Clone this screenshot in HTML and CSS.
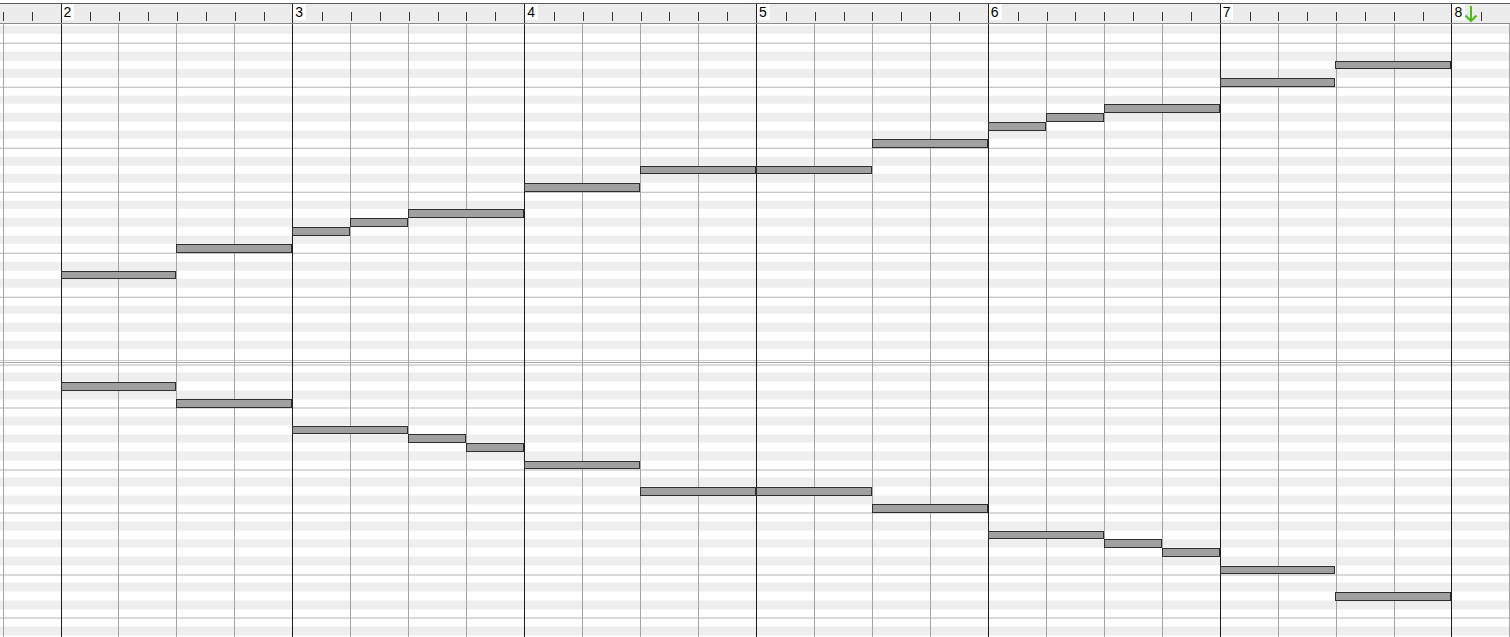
FILE: index.html
```html
<!DOCTYPE html>
<html lang="en">
<head>
    <meta charset="UTF-8">
    <meta name="viewport" content="width=device-width, initial-scale=1.0">
    <title>Piano roll</title>
    <link rel="stylesheet" href="styles.css">
</head>
<body>

<!-- ruler: one block per measure, eight eighth-note cells each -->
<div class="ruler">
    <div class="rbars">
        <div class="rm"><div class="et num"><span></span></div><div class="et"></div><div class="et"></div><div class="et"></div><div class="et"></div><div class="et"></div><div class="et"></div><div class="et"></div></div>
        <div class="rm"><div class="et num"><span>2</span></div><div class="et"></div><div class="et"></div><div class="et"></div><div class="et"></div><div class="et"></div><div class="et"></div><div class="et"></div></div>
        <div class="rm"><div class="et num"><span>3</span></div><div class="et"></div><div class="et"></div><div class="et"></div><div class="et"></div><div class="et"></div><div class="et"></div><div class="et"></div></div>
        <div class="rm"><div class="et num"><span>4</span></div><div class="et"></div><div class="et"></div><div class="et"></div><div class="et"></div><div class="et"></div><div class="et"></div><div class="et"></div></div>
        <div class="rm"><div class="et num"><span>5</span></div><div class="et"></div><div class="et"></div><div class="et"></div><div class="et"></div><div class="et"></div><div class="et"></div><div class="et"></div></div>
        <div class="rm"><div class="et num"><span>6</span></div><div class="et"></div><div class="et"></div><div class="et"></div><div class="et"></div><div class="et"></div><div class="et"></div><div class="et"></div></div>
        <div class="rm"><div class="et num"><span>7</span></div><div class="et"></div><div class="et"></div><div class="et"></div><div class="et"></div><div class="et"></div><div class="et"></div><div class="et"></div></div>
        <div class="rm"><div class="et num"><span>8</span></div><div class="et"></div><div class="et"></div><div class="et"></div><div class="et"></div><div class="et"></div><div class="et"></div><div class="et"></div></div>
    </div>
    <!-- playback cursor -->
    <svg class="cursor" width="14" height="18" viewBox="0 0 14 18">
        <path d="M7 1 V16 M1.5 10.5 L7 16 L12.5 10.5" fill="none" stroke="#4fb81c" stroke-width="2"/>
    </svg>
</div>

<div class="roll">
    <div class="lane top"></div>
    <div class="split"></div>
    <div class="lane bot"></div>

    <!-- bar and beat lines over both lanes -->
    <div class="beats">
        <div class="bm"><div class="bt"></div><div class="bt"></div><div class="bt"></div><div class="bt"></div></div>
        <div class="bm"><div class="bt"></div><div class="bt"></div><div class="bt"></div><div class="bt"></div></div>
        <div class="bm"><div class="bt"></div><div class="bt"></div><div class="bt"></div><div class="bt"></div></div>
        <div class="bm"><div class="bt"></div><div class="bt"></div><div class="bt"></div><div class="bt"></div></div>
        <div class="bm"><div class="bt"></div><div class="bt"></div><div class="bt"></div><div class="bt"></div></div>
        <div class="bm"><div class="bt"></div><div class="bt"></div><div class="bt"></div><div class="bt"></div></div>
        <div class="bm"><div class="bt"></div><div class="bt"></div><div class="bt"></div><div class="bt"></div></div>
        <div class="bm"><div class="bt"></div><div class="bt"></div><div class="bt"></div><div class="bt"></div></div>
    </div>

    <!-- upper voice: row = pitch (top row is G), column = beat from bar 2 -->
    <div class="notes top">
        <div class="n" style="grid-row:30;grid-column:1/3"></div>
        <div class="n" style="grid-row:27;grid-column:3/5"></div>
        <div class="n" style="grid-row:25;grid-column:5/6"></div>
        <div class="n" style="grid-row:24;grid-column:6/7"></div>
        <div class="n" style="grid-row:23;grid-column:7/9"></div>
        <div class="n" style="grid-row:20;grid-column:9/11"></div>
        <div class="n" style="grid-row:18;grid-column:11/13"></div>
        <div class="n" style="grid-row:18;grid-column:13/15"></div>
        <div class="n" style="grid-row:15;grid-column:15/17"></div>
        <div class="n" style="grid-row:13;grid-column:17/18"></div>
        <div class="n" style="grid-row:12;grid-column:18/19"></div>
        <div class="n" style="grid-row:11;grid-column:19/21"></div>
        <div class="n" style="grid-row:8;grid-column:21/23"></div>
        <div class="n" style="grid-row:6;grid-column:23/25"></div>
    </div>

    <!-- lower voice: top row is F -->
    <div class="notes bot">
        <div class="n" style="grid-row:4;grid-column:1/3"></div>
        <div class="n" style="grid-row:6;grid-column:3/5"></div>
        <div class="n" style="grid-row:9;grid-column:5/7"></div>
        <div class="n" style="grid-row:10;grid-column:7/8"></div>
        <div class="n" style="grid-row:11;grid-column:8/9"></div>
        <div class="n" style="grid-row:13;grid-column:9/11"></div>
        <div class="n" style="grid-row:16;grid-column:11/13"></div>
        <div class="n" style="grid-row:16;grid-column:13/15"></div>
        <div class="n" style="grid-row:18;grid-column:15/17"></div>
        <div class="n" style="grid-row:21;grid-column:17/19"></div>
        <div class="n" style="grid-row:22;grid-column:19/20"></div>
        <div class="n" style="grid-row:23;grid-column:20/21"></div>
        <div class="n" style="grid-row:25;grid-column:21/23"></div>
        <div class="n" style="grid-row:28;grid-column:23/25"></div>
    </div>
</div>

</body>
</html>
```

FILE: styles.css
```css
*{
    box-sizing: border-box;
}
body{
    margin: 0;
    background-color: white;
    font-family: "Liberation Sans", Arial, sans-serif;
    overflow: hidden;
}

/* ruler */
.ruler{
    position: relative;
    margin-top: 3px;
    height: 21px;
    background-color: #ececec;
    border-top: 1px solid #5a5a5a;
    border-bottom: 1px solid #8c8c8c;
    overflow: hidden;
}
.rbars{
    display: flex;
    height: 100%;
    margin-left: -171.33px;
}
.rm{
    flex: none;
    width: 231.83px;
    display: flex;
    border-left: 1px solid #222;
}
.et{
    flex: 1;
    display: flex;
    align-items: flex-end;
}
.et::before{
    content: "";
    width: 1px;
    height: 9px;
    margin-bottom: 2px;
    background-color: #333;
}
.et.num{
    align-items: flex-start;
}
.et.num::before{
    display: none;
}
.et.num span{
    background-color: white;
    padding: 0 3px 0 2px;
    font-size: 14px;
    line-height: 16px;
    color: black;
}
.cursor{
    position: absolute;
    left: 1464px;
    top: 1px;
}

/* piano roll */
.roll{
    display: grid;
    grid-template-columns: 1510px;
    grid-template-rows: 333px 6px 274px;
    height: 613px;
    overflow: hidden;
}
.lane{
    grid-column: 1;
    background-repeat: repeat-y;
    background-size: 100% 105px;
}
/* one octave per tile, shaded rows are the black keys */
.lane.top{
    grid-row: 1;
    background-position: 0 -7.25px;
    background-image: linear-gradient(to bottom,
        #fff 0 8.75px,
        #eeeeee 8.75px 17.5px,
        #fff 17.5px 26.25px,
        #b4b4b4 26.25px 27.25px,
        #fff 27.25px 35px,
        #eeeeee 35px 43.75px,
        #fff 43.75px 52.5px,
        #eeeeee 52.5px 61.25px,
        #fff 61.25px 70px,
        #b4b4b4 70px 71px,
        #fff 71px 78.75px,
        #eeeeee 78.75px 87.5px,
        #fff 87.5px 96.25px,
        #eeeeee 96.25px 105px);
}
.lane.bot{
    grid-row: 3;
    background-position: 0 -7.5px;
    background-image: linear-gradient(to bottom,
        #fff 0 8.75px,
        #b4b4b4 8.75px 9.75px,
        #fff 9.75px 17.5px,
        #eeeeee 17.5px 26.25px,
        #fff 26.25px 35px,
        #eeeeee 35px 43.75px,
        #fff 43.75px 52.5px,
        #b4b4b4 52.5px 53.5px,
        #fff 53.5px 61.25px,
        #eeeeee 61.25px 70px,
        #fff 70px 78.75px,
        #eeeeee 78.75px 87.5px,
        #fff 87.5px 96.25px,
        #eeeeee 96.25px 105px);
}
.split{
    grid-row: 2;
    grid-column: 1;
    background: linear-gradient(to bottom, #fff 0 3px, #cfcfcf 3px 4px, #fff 4px 5px, #a8a8a8 5px 6px);
}

.beats{
    grid-row: 1 / 4;
    grid-column: 1;
    display: flex;
    margin-left: -171.33px;
}
.bm{
    flex: none;
    width: 231.83px;
    display: flex;
    border-left: 1px solid #1c1c1c;
}
.bt{
    flex: 1;
}
.bt + .bt{
    border-left: 1px solid #a4a4a4;
}

.notes{
    grid-column: 1;
    align-self: start;
    display: grid;
    grid-template-columns: repeat(24, 57.958px);
    margin-left: 60.5px;
}
.notes.top{
    grid-row: 1;
    grid-template-rows: repeat(40, 8.75px);
    margin-top: -7.25px;
}
.notes.bot{
    grid-row: 3;
    grid-template-rows: repeat(33, 8.75px);
    margin-top: -7.5px;
}
.n{
    background-color: #a0a0a0;
    border: 1px solid #2e2e2e;
}
```
